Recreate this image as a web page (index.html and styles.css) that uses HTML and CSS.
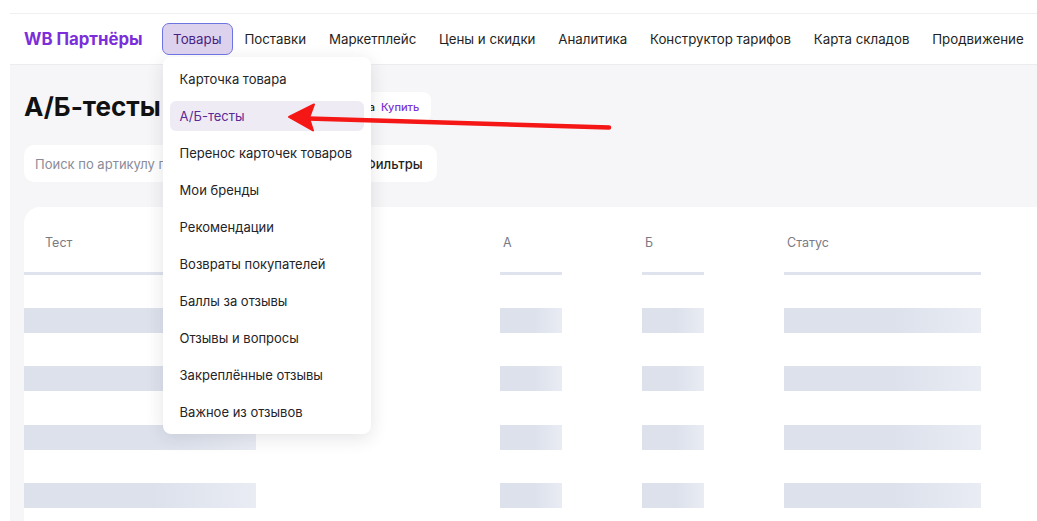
FILE: index.html
```html
<!DOCTYPE html>
<html lang="ru">
<head>
  <meta charset="UTF-8">
  <meta name="viewport" content="width=device-width, initial-scale=1.0">
  <title>А/Б-тесты — WB Партнёры</title>
  <link rel="stylesheet" href="styles.css">
</head>
<body>
  <div class="app">
    <header class="topbar">
      <div class="logo">WB Партнёры</div>
      <nav class="nav">
        <div class="nav-drop">
          <span class="nav-item nav-item-active">Товары</span>
          <ul class="dropdown">
            <li>Карточка товара</li>
            <li class="selected">А/Б-тесты</li>
            <li>Перенос карточек товаров</li>
            <li>Мои бренды</li>
            <li>Рекомендации</li>
            <li>Возвраты покупателей</li>
            <li>Баллы за отзывы</li>
            <li>Отзывы и вопросы</li>
            <li>Закреплённые отзывы</li>
            <li>Важное из отзывов</li>
          </ul>
        </div>
        <span class="nav-item">Поставки</span>
        <span class="nav-item">Маркетплейс</span>
        <span class="nav-item">Цены и скидки</span>
        <span class="nav-item">Аналитика</span>
        <span class="nav-item">Конструктор тарифов</span>
        <span class="nav-item">Карта складов</span>
        <span class="nav-item">Продвижение</span>
      </nav>
    </header>

    <main class="content">
      <div class="title-row">
        <h1>А/Б-тесты</h1>
        <div class="chip">
          <span class="chip-icon"></span>
          <span>Нужна активная подписка</span>
          <a class="chip-link">Купить</a>
        </div>
      </div>

      <div class="toolbar">
        <div class="search">Поиск по артикулу продавца</div>
        <button class="filters">
          <svg width="16" height="16" viewBox="0 0 16 16"><path d="M2 4h12M4 8h8M6 12h4" stroke="#222" stroke-width="1.6" stroke-linecap="round" fill="none"/></svg>
          Фильтры
        </button>
      </div>

      <section class="card">
        <div class="grid">
          <div class="th th-first">Тест<span class="bar bar-wide"></span></div>
          <div class="th">А<span class="bar bar-small"></span></div>
          <div class="th">Б<span class="bar bar-small"></span></div>
          <div class="th">Статус<span class="bar bar-status"></span></div>

          <div class="td"><span class="sk sk-wide"></span></div>
          <div class="td"><span class="sk sk-small"></span></div>
          <div class="td"><span class="sk sk-small"></span></div>
          <div class="td"><span class="sk sk-status"></span></div>

          <div class="td"><span class="sk sk-wide"></span></div>
          <div class="td"><span class="sk sk-small"></span></div>
          <div class="td"><span class="sk sk-small"></span></div>
          <div class="td"><span class="sk sk-status"></span></div>

          <div class="td"><span class="sk sk-wide"></span></div>
          <div class="td"><span class="sk sk-small"></span></div>
          <div class="td"><span class="sk sk-small"></span></div>
          <div class="td"><span class="sk sk-status"></span></div>

          <div class="td"><span class="sk sk-wide"></span></div>
          <div class="td"><span class="sk sk-small"></span></div>
          <div class="td"><span class="sk sk-small"></span></div>
          <div class="td"><span class="sk sk-status"></span></div>
        </div>
      </section>
    </main>
  </div>

  <!-- red annotation arrow drawn over the screenshot -->
  <svg class="annotation" width="1037" height="521" viewBox="0 0 1037 521">
    <path d="M308 118.5 C 420 121, 520 124, 609 127.5" stroke="#f51616" stroke-width="4.5" stroke-linecap="round" fill="none"/>
    <path d="M289 117 L314 104.5 L309 118 L313 130.5 Z" fill="#f51616" stroke="#f51616" stroke-width="2" stroke-linejoin="round"/>
  </svg>
</body>
</html>
```

FILE: styles.css
```css
html,
body {
  height: 100%;
}

body {
  margin: 0;
  background-color: #fff;
  font-family: Inter, 'Noto Sans', sans-serif;
  color: #1f1f23;
  overflow: hidden;
  position: relative;
}

.app {
  margin: 13px 0 0 10px;
  border-top: 1px solid #efeff2;
  height: calc(100% - 14px);
  display: flex;
  flex-direction: column;
}

/* Top navigation */
.topbar {
  flex-shrink: 0;
  height: 50px;
  display: flex;
  align-items: center;
  padding-left: 14px;
  background-color: #fff;
  border-bottom: 1px solid #ececf0;
  position: relative;
  z-index: 5;
}

.logo {
  font-size: 16.8px;
  font-weight: 700;
  color: #7b2ed9;
  margin-right: 19px;
  white-space: nowrap;
  flex-shrink: 0;
}

.nav {
  display: flex;
  align-items: center;
  flex-shrink: 0;
}

.nav-item {
  display: inline-flex;
  align-items: center;
  height: 32px;
  padding: 0 11.4px;
  font-size: 13.3px;
  white-space: nowrap;
  color: #1f1f23;
  box-sizing: border-box;
}

.nav-item-active {
  background-color: #dcd2ee;
  border: 1.5px solid #6d74e2;
  border-radius: 7px;
  color: #4b1f84;
  padding: 0 10.5px;
  position: relative;
  z-index: 2;
}

.nav-drop {
  position: relative;
}

/* Dropdown menu */
.dropdown {
  position: absolute;
  top: calc(100% + 2px);
  left: 1px;
  width: 208px;
  margin: 0;
  padding: 7px;
  box-sizing: border-box;
  list-style: none;
  background-color: #fff;
  border-radius: 8px;
  box-shadow: 0 4px 18px rgba(30, 30, 60, 0.12);
  display: flex;
  flex-direction: column;
  gap: 7px;
}

.dropdown li {
  height: 30px;
  display: flex;
  align-items: center;
  padding-left: 10px;
  font-size: 13px;
  color: #242428;
  border-radius: 6px;
  white-space: nowrap;
}

.dropdown li.selected {
  background-color: #efebf4;
  color: #5a2996;
}

/* Page content */
.content {
  flex: 1;
  background-color: #f6f6f8;
  padding-left: 14px;
}

.title-row {
  display: flex;
  align-items: center;
  margin-top: 27px;
  height: 30px;
}

h1 {
  margin: 0 36px 0 0;
  font-size: 26px;
  line-height: 30px;
  font-weight: 700;
  color: #111;
  white-space: nowrap;
}

.chip {
  display: flex;
  align-items: center;
  gap: 6px;
  height: 30px;
  padding: 0 12px;
  background-color: #fff;
  border-radius: 8px;
  font-size: 11px;
  font-weight: 500;
  color: #1f1f23;
  white-space: nowrap;
}

.chip-icon {
  width: 14px;
  height: 14px;
  border-radius: 50%;
  background-color: #e9defa;
  margin-right: 2px;
}

.chip-link {
  color: #7a35d6;
}

.toolbar {
  display: flex;
  gap: 8px;
  margin-top: 23px;
}

.search {
  width: 295px;
  height: 37px;
  display: flex;
  align-items: center;
  padding-left: 11px;
  box-sizing: border-box;
  background-color: #fff;
  border-radius: 10px;
  font-size: 13px;
  color: #8b8b98;
  white-space: nowrap;
  overflow: hidden;
}

.filters {
  display: flex;
  align-items: center;
  gap: 8px;
  height: 37px;
  padding: 0 14px;
  border: none;
  background-color: #fff;
  border-radius: 10px;
  font-family: inherit;
  font-size: 13px;
  font-weight: 500;
  color: #1f1f23;
}

/* Table card */
.card {
  margin-top: 25px;
  background-color: #fff;
  border-top-left-radius: 16px;
  height: 320px;
}

.grid {
  display: grid;
  grid-template-columns: 476px 142px 142px 1fr;
}

.th {
  position: relative;
  height: 68px;
  padding: 27px 0 0 3px;
  box-sizing: border-box;
  font-size: 12.5px;
  line-height: 18px;
  color: #7a7a84;
}

.th-first {
  padding-left: 21px;
}

.bar {
  position: absolute;
  left: 0;
  bottom: 0;
  height: 3px;
  background-color: #dfe3ee;
}

.bar-wide {
  width: 232px;
}

.bar-small {
  width: 62px;
}

.bar-status {
  width: 197px;
}

.td {
  height: 58.3px;
  padding-top: 33px;
  box-sizing: border-box;
}

.sk {
  display: block;
  height: 25px;
  background: linear-gradient(90deg, #dce1ec 55%, #e9ecf3 100%);
}

.sk-wide {
  width: 232px;
}

.sk-small {
  width: 62px;
}

.sk-status {
  width: 197px;
}

.annotation {
  position: absolute;
  top: 0;
  left: 0;
  pointer-events: none;
  z-index: 10;
}
```
